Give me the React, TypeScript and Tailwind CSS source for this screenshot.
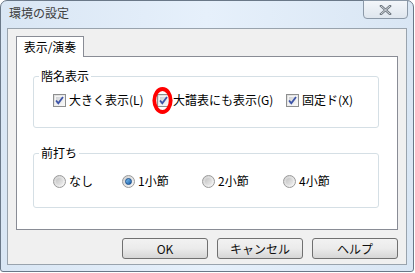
import React from "react";

const font = { fontFamily: '"Noto Sans CJK JP", "Noto Sans", sans-serif' };

function Check() {
  return (
    <span className="relative inline-flex h-[13px] w-[13px] shrink-0 items-center justify-center border border-[#8e8f8f] bg-gradient-to-br from-[#dcdcdc] to-[#fafafa]">
      <span className="absolute inset-[1px] border border-[#f4f4f4] bg-gradient-to-br from-[#cfd1d4] to-[#f7f7f7]" />
      <svg width="9" height="9" viewBox="0 0 9 9" className="relative">
        <path d="M1 4.5 L3.3 7.2 L8 1" fill="none" stroke="#3d54a8" strokeWidth="1.8" />
      </svg>
    </span>
  );
}

function Radio({ on }: { on?: boolean }) {
  return (
    <span className="relative inline-flex h-[13px] w-[13px] shrink-0 items-center justify-center rounded-full border border-[#9a9a9a] bg-gradient-to-br from-[#d0d0d0] to-[#f8f8f8]">
      {on ? (
        <span className="h-[7px] w-[7px] rounded-full border border-[#1b4f8c] bg-gradient-to-br from-[#7fc3f3] to-[#145ea8]" />
      ) : (
        <span className="h-[7px] w-[7px] rounded-full bg-gradient-to-br from-[#c4c4c4] to-[#ececec]" />
      )}
    </span>
  );
}

function Btn({ children }: { children: React.ReactNode }) {
  return (
    <div className="flex h-[21px] w-[86px] items-center justify-center rounded-[3px] border border-[#707070] bg-gradient-to-b from-[#f2f2f2] via-[#ebebeb] to-[#d6d6d6] text-[12px] text-[#111]">
      {children}
    </div>
  );
}

export default function App() {
  return (
    <div className="relative h-[273px] w-[415px] overflow-hidden bg-white" style={font}>
      <div className="flex h-[272px] w-[414px] flex-col rounded-t-[7px] rounded-b-[3px] border border-[#6a7888] bg-gradient-to-r from-[#d9e6f4] via-[#e6f0fb] to-[#d9e6f4]">
        {/* title bar */}
        <div className="flex h-[27px] shrink-0 items-start justify-between">
          <div className="pl-[8px] pt-[5px] text-[12px] leading-[14px] text-[#404040]">環境の設定</div>
          <div className="mr-[5px] mt-[-1px] flex h-[19px] w-[45px] items-center justify-center rounded-b-[4px] border border-[#8c99a8] bg-gradient-to-b from-[#f3f6fa] to-[#dfe6ee]">
            <svg width="13" height="10" viewBox="0 0 13 10">
              <path d="M2 1 L11 9 M11 1 L2 9" stroke="#6f7780" strokeWidth="2.4" strokeLinecap="square" />
              <path d="M2 1 L11 9 M11 1 L2 9" stroke="#e8ecf0" strokeWidth="0.8" />
            </svg>
          </div>
        </div>
        {/* client area */}
        <div className="mx-[6px] flex h-[237px] flex-col border border-[#99a3ad] bg-[#f0f0f0] px-[8px]">
          {/* tab header */}
          <div className="mt-[6px] flex h-[21px] items-end">
            <div className="relative z-10 mb-[-1px] flex h-[21px] w-[68px] items-center justify-center border border-b-0 border-[#898c95] bg-white text-[12px] text-black">
              表示/演奏
            </div>
          </div>
          {/* tab panel */}
          <div className="flex h-[174px] flex-col border border-[#898c95] bg-white pl-[16px] pr-[18px] pt-[11px]">
            <fieldset className="h-[60px] rounded-[3px] border border-[#d5dfe5] px-[0px]">
              <legend className="ml-[5px] px-[2px] text-[12px] leading-[16px] text-black">階名表示</legend>
              <div className="flex items-center pl-[19px] pt-[9px] text-[12px] leading-[14px] text-black">
                <div className="flex w-[104px] items-center gap-[3px]">
                  <Check />
                  <span>大きく表示(L)</span>
                </div>
                <div className="flex w-[129px] items-center gap-[3px]">
                  <Check />
                  <span>大譜表にも表示(G)</span>
                </div>
                <div className="flex items-center gap-[3px]">
                  <Check />
                  <span>固定ド(X)</span>
                </div>
              </div>
            </fieldset>
            <fieldset className="mt-[17px] h-[63px] rounded-[3px] border border-[#d5dfe5] px-[0px]">
              <legend className="ml-[5px] px-[2px] text-[12px] leading-[16px] text-black">前打ち</legend>
              <div className="flex items-center pl-[19px] pt-[13px] text-[12px] leading-[14px] text-black">
                <div className="flex w-[69px] items-center gap-[3px]">
                  <Radio />
                  <span>なし</span>
                </div>
                <div className="flex w-[80px] items-center gap-[3px]">
                  <Radio on />
                  <span>1小節</span>
                </div>
                <div className="flex w-[81px] items-center gap-[3px]">
                  <Radio />
                  <span>2小節</span>
                </div>
                <div className="flex items-center gap-[3px]">
                  <Radio />
                  <span>4小節</span>
                </div>
              </div>
            </fieldset>
          </div>
          {/* buttons */}
          <div className="mt-[8px] flex justify-end gap-[9px]">
            <Btn>OK</Btn>
            <Btn>キャンセル</Btn>
            <Btn>ヘルプ</Btn>
          </div>
        </div>
      </div>
      {/* red annotation circle */}
      <svg className="pointer-events-none absolute left-[151px] top-[86px]" width="24" height="29" viewBox="0 0 24 29">
        <ellipse cx="11.5" cy="14.5" rx="8.2" ry="11.5" fill="none" stroke="#ff0000" strokeWidth="3.8" />
      </svg>
    </div>
  );
}
